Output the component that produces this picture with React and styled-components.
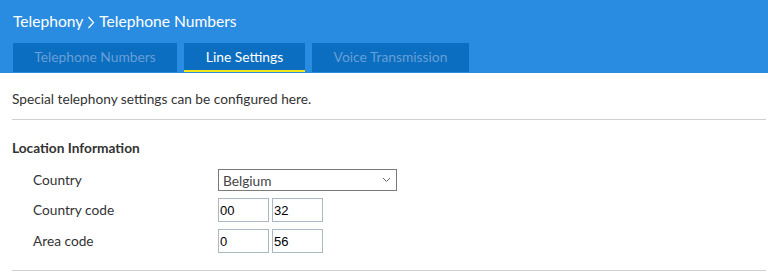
import React from "react";
import styled, { createGlobalStyle } from "styled-components";

const GlobalStyle = createGlobalStyle`
  html, body {
    margin: 0;
    padding: 0;
    background: #fff;
  }
  body {
    font-family: "Lato", "Liberation Sans", sans-serif;
    color: #333;
  }
`;

const Header = styled.header`
  background: #2a8ce0;
  padding: 0 13px;
  height: 73px;
  display: flex;
  flex-direction: column;
`;

const Title = styled.h1`
  margin: 0;
  padding-top: 12px;
  height: 43px;
  box-sizing: border-box;
  font-size: 15.6px;
  font-weight: 400;
  line-height: 19px;
  color: #fff;
  display: flex;
  align-items: flex-start;
  gap: 4px;
  svg {
    margin-top: 4px;
  }
`;

const Tabs = styled.nav`
  display: flex;
  gap: 7px;
`;

const Tab = styled.div`
  width: ${p => p.width}px;
  height: 29px;
  box-sizing: border-box;
  background: #0b6ec0;
  color: ${p => (p.active ? "#fff" : "#679fd6")};
  font-size: 13.8px;
  display: flex;
  align-items: center;
  justify-content: center;
  border-bottom: 2px solid ${p => (p.active ? "#f2e51a" : "#0b6ec0")};
  padding-bottom: 1px;
`;

const Content = styled.main`
  padding: 0 2px 0 12px;
`;

const Intro = styled.p`
  margin: 0;
  padding: 17px 0 11px;
  font-size: 13.7px;
  line-height: 18px;
`;

const Divider = styled.hr`
  margin: 0;
  border: 0;
  border-top: 1px solid #d0d0d0;
`;

const Section = styled.section`
  padding: 19px 0 17px;
`;

const SectionTitle = styled.h2`
  margin: 0 0 12px;
  font-size: 13.7px;
  font-weight: 700;
  line-height: 18px;
  color: #333;
`;

const Row = styled.div`
  display: grid;
  grid-template-columns: 185px auto;
  align-items: center;
  padding-left: 21px;
  margin-bottom: ${p => p.gap || 0}px;
`;

const Label = styled.span`
  font-size: 13.7px;
  line-height: 18px;
`;

const SelectBox = styled.div`
  width: 179px;
  height: 22px;
  box-sizing: border-box;
  border: 1px solid #7a7a7a;
  display: flex;
  align-items: center;
  justify-content: space-between;
  padding: 0 5px 0 4px;
  font-size: 13.7px;
  color: #444;
`;

const Inputs = styled.div`
  display: flex;
  gap: 3px;
`;

const Field = styled.div`
  width: 51px;
  height: 24px;
  box-sizing: border-box;
  border: 1px solid #aab8c2;
  display: flex;
  align-items: center;
  padding-left: 1px;
  font-family: "Liberation Sans", sans-serif;
  font-size: 13px;
  color: #000;
`;

const Chevron = () => (
  <svg width="9" height="6" viewBox="0 0 9 6">
    <path d="M1 1l3.5 3.5L8 1" fill="none" stroke="#666" strokeWidth="1" />
  </svg>
);

const Crumb = () => (
  <svg width="8" height="13" viewBox="0 0 8 13">
    <path d="M1.5 1l5 5.5-5 5.5" fill="none" stroke="#fff" strokeWidth="1.3" />
  </svg>
);

const tabs = [
  { label: "Telephone Numbers", width: 164 },
  { label: "Line Settings", width: 121, active: true },
  { label: "Voice Transmission", width: 157 }
];

const App = () => (
  <>
    <GlobalStyle />
    <Header>
      <Title>
        Telephony <Crumb /> Telephone Numbers
      </Title>
      <Tabs>
        {tabs.map(tab => (
          <Tab key={tab.label} width={tab.width} active={tab.active}>
            {tab.label}
          </Tab>
        ))}
      </Tabs>
    </Header>
    <Content>
      <Intro>Special telephony settings can be configured here.</Intro>
      <Divider />
      <Section>
        <SectionTitle>Location Information</SectionTitle>
        <Row gap={7}>
          <Label>Country</Label>
          <SelectBox>
            Belgium
            <Chevron />
          </SelectBox>
        </Row>
        <Row gap={7}>
          <Label>Country code</Label>
          <Inputs>
            <Field>00</Field>
            <Field>32</Field>
          </Inputs>
        </Row>
        <Row>
          <Label>Area code</Label>
          <Inputs>
            <Field>0</Field>
            <Field>56</Field>
          </Inputs>
        </Row>
      </Section>
      <Divider />
    </Content>
  </>
);

export default App;
